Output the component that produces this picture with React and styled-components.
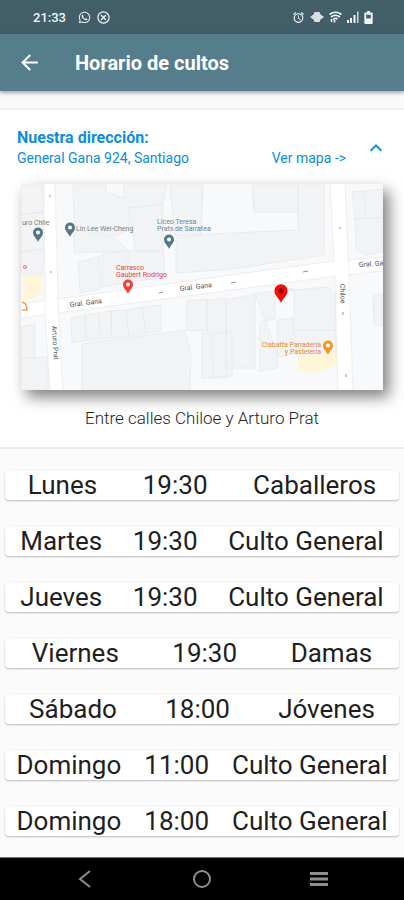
import React, { useState } from 'react';
import styled, { createGlobalStyle } from 'styled-components';
import { MdArrowBack, MdKeyboardArrowUp, MdKeyboardArrowDown, MdAlarm } from 'react-icons/md';
import { FaWhatsapp } from 'react-icons/fa';

const GlobalStyle = createGlobalStyle`
  * {
    box-sizing: border-box;
  }
  body {
    margin: 0;
    background: #fafafa;
    font-family: Roboto, "Liberation Sans", sans-serif;
    color: #1f1f1f;
  }
`

const Screen = styled.div`
  display: flex;
  flex-direction: column;
  min-height: 100vh;
`

const StatusBar = styled.div`
  display: flex;
  align-items: center;
  justify-content: space-between;
  height: 34px;
  padding: 0 31px 0 33px;
  background: #425e69;
  color: #f1f6f8;
`

const StatusGroup = styled.div`
  display: flex;
  align-items: center;
  gap: ${props => props.$gap};
`

const Clock = styled.span`
  margin-right: 6px;
  font-size: 13px;
  font-weight: 500;
`

const AppBar = styled.header`
  position: relative;
  display: flex;
  align-items: center;
  gap: 33px;
  height: 57px;
  padding: 0 17px;
  background: #567d8c;
  color: #ffffff;
  box-shadow: 0 2px 4px rgba(0, 0, 0, 0.35);
`

const IconButton = styled.button`
  display: flex;
  padding: 0;
  border: 0;
  background: none;
  color: ${props => props.$color || 'inherit'};
  cursor: pointer;
`

const Title = styled.h1`
  margin: 0;
  font-size: 20px;
  font-weight: 700;
`

const Panel = styled.section`
  margin-top: 17px;
  padding: 17px 21px 18px;
  border-top: 2px solid #f0f3f3;
  border-bottom: 2px solid #ececec;
  background: #ffffff;
`

const PanelHeader = styled.div`
  display: flex;
  align-items: center;
  gap: 18px;
  margin: 0 -5px 16px -4px;
  color: #0d8de0;
`

const Address = styled.div`
  flex: 1;
`

const AddressTitle = styled.h2`
  margin: 0;
  font-size: 16px;
  line-height: 21px;
  font-weight: 700;
`

const AddressLine = styled.div`
  display: flex;
  justify-content: space-between;
  font-size: 14px;
  line-height: 20px;
`

const MapLink = styled.a`
  color: inherit;
  text-decoration: none;
`

const MapImage = styled.svg`
  display: block;
  width: 100%;
  background: #f8f9fa;
  box-shadow: 6px 7px 14px rgba(0, 0, 0, 0.5);
  font-family: Roboto, sans-serif;
`

const Caption = styled.p`
  margin: 17px 0 0;
  font-size: 17px;
  line-height: 22px;
  font-weight: 300;
  text-align: center;
`

const Schedule = styled.table`
  display: block;
  padding: 22px 5px 21px;
`

const ScheduleBody = styled.tbody`
  display: flex;
  flex-direction: column;
  gap: 27px;
`

const ScheduleRow = styled.tr`
  display: flex;
  justify-content: space-around;
  border-radius: 4px;
  background: #ffffff;
  box-shadow: 0 1px 2px rgba(0, 0, 0, 0.25);
`

const Cell = styled.td`
  padding: 0;
  font-size: 26px;
  line-height: 29px;
  white-space: nowrap;
`

const NavBar = styled.nav`
  display: flex;
  align-items: center;
  justify-content: space-around;
  height: 43px;
  margin-top: auto;
  padding: 0 27px;
  border-top: 1px solid #777777;
  background: #000000;
`

const cultos = [
  { dia: 'Lunes', hora: '19:30', tipo: 'Caballeros' },
  { dia: 'Martes', hora: '19:30', tipo: 'Culto General' },
  { dia: 'Jueves', hora: '19:30', tipo: 'Culto General' },
  { dia: 'Viernes', hora: '19:30', tipo: 'Damas' },
  { dia: 'Sábado', hora: '18:00', tipo: 'Jóvenes' },
  { dia: 'Domingo', hora: '11:00', tipo: 'Culto General' },
  { dia: 'Domingo', hora: '18:00', tipo: 'Culto General' },
]

const CancelIcon = () => (
  <svg width="13" height="13" viewBox="0 0 13 13" fill="none" stroke="currentColor" strokeWidth="1.2">
    <circle cx="6.5" cy="6.5" r="5.6" />
    <path d="M4 4l5 5M9 4l-5 5" />
  </svg>
)

const VibrateIcon = () => (
  <svg width="14" height="12" viewBox="0 0 14 12" fill="currentColor">
    <rect x="4" y="1" width="6" height="10" rx="1" opacity="0.85" />
    <path d="M4 3v6L0 6zM10 3v6L14 6z" opacity="0.85" />
  </svg>
)

const WifiIcon = () => (
  <svg width="13" height="12" viewBox="0 0 13 12" fill="none" stroke="currentColor" strokeWidth="1.6">
    <path d="M0.5 3.5Q6.5-1 12.5 3.5M2 6Q6.5 2.5 11 6M4 8.5Q6.5 6.5 8.5 8" />
    <path d="M2.5 8v3M5.5 9v2.5" />
  </svg>
)

const SignalIcon = () => (
  <svg width="12" height="12" viewBox="0 0 12 12" fill="currentColor">
    <path d="M0 9h2v3H0zM3 7h2v5H3zM6.5 4h2v8h-2z" />
    <path d="M10 .5h1.5V12H10z" opacity="0.8" />
  </svg>
)

const BatteryIcon = () => (
  <svg width="9" height="13" viewBox="0 0 9 14">
    <path d="M3 0h3v1.5h2q1 0 1 1V13q0 1-1 1H1q-1 0-1-1V2.5q0-1 1-1h2z" fill="currentColor" />
    <rect x="2" y="4" width="5" height="4" fill="#425e69" />
  </svg>
)

const Pin = ({ x, y, color, dot = '#ffffff', scale = 1 }) => (
  <g transform={`translate(${x} ${y}) scale(${scale})`}>
    <path d="M0 0C-1.5-4-5-5.5-5-9.5a5 5 0 0 1 10 0C5-5.5 1.5-4 0 0z" fill={color} />
    <circle cx="0" cy="-9.5" r="2" fill={dot} />
  </g>
)

const StreetMap = () => (
  <MapImage viewBox="0 0 362 206" role="img" aria-label="Mapa de General Gana 924">
    {/* manzanas */}
    <g fill="#f2f3f5" stroke="#e6e9eb" strokeWidth="0.8">
      <path d="M0 0H22V28L0 31zM0 31L22 28V64L0 68zM0 68L22 65V90H0z" />
      <path d="M52 0H85V8L103 14V0H146L142 20L107 24L108 46L94 52L53 42z" />
      <path d="M53 45L92 53L108 67L53 69zM108 24L142 20V67L114 66z" />
      <path d="M149 0H182L180 50L154 52z" />
      <path d="M155 54L190 50L277 46V0H303V71L212 85L155 89z" />
      <path d="M231 0H277V28H233z" />
      <path d="M57 78L79 72V105L59 109zM82 70L105 67V99L80 103zM107 67L143 68V94L107 98z" />
      <path d="M331 8L362 5V34L334 35zM344 10V33M334 35L362 33V68L344 71L335 65z" />
      <path d="M0 143L14 140V174H0zM0 174L27 173V206H0z" />
      <path d="M50 134L64 131V157L51 159zM64 131L78 129V155L66 157zM78 129L90 127V154L80 155zM90 127L105 126L108 152L91 154zM105 126L121 123L125 149L108 152zM121 123L140 121V147L125 149z" />
      <path d="M61 160L164 146L170 172L169 206H61z" />
      <path d="M166 117L186 115V147L165 146zM186 116L205 114V194H181V149H186zM205 116L234 110V184H205zM191 150L211 148V192L192 193z" />
      <path d="M234 110L254 107V135L239 138V187L256 184V136L272 134V170L258 173z" />
      <path d="M257 107L273 104V146H315V110L307 103L273 106z" />
      <path d="M273 146H315V168L276 172z" />
      <path d="M352 112L362 110V142L353 140z" />
    </g>
    <path d="M2 91H21V111L3 117z" fill="#fff6d9" />
    <path d="M277 171L316 168V181L300 187H277z" fill="#fff6d9" />

    {/* calles */}
    <g fill="#ffffff" stroke="#e7eaed" strokeWidth="0.8">
      <path d="M0 120L312 77L362 73V87L316 92L0 134z" />
      <path d="M23-2H34L37 115L42 208H29L24 128z" />
      <path d="M309-2H324L328 90L332 208H317L314 96z" />
    </g>
    <path d="M24 118L36 117L37 127L25 129zM310 78L327 77L328 89L313 91z" fill="#ffffff" />
    <path
      d="M138 109l4-1M210 99l5-1M282 88l5-1M29 11v2M30 87v2M319 43v2M322 128v3M325 190v3"
      stroke="#8b9298"
    />

    <g fontSize="7" fill="#50565b">
      <text transform="translate(49 123) rotate(-7)">Gral. Gana</text>
      <text transform="translate(159 107) rotate(-7)">Gral. Gana</text>
      <text transform="translate(338 83) rotate(-4)">Gral. Ga</text>
      <text transform="translate(31 142) rotate(87)">Arturo Prat</text>
      <text transform="translate(319 100) rotate(88)">Chiloe</text>
    </g>
    <g fontSize="7" fill="#6b838f">
      <text x="1" y="41">uro Chile</text>
      <text x="55" y="47">Lin Lee Wei-Cheng</text>
      <text x="136" y="40">Liceo Teresa</text>
      <text x="136" y="47">Prats de Sarratea</text>
    </g>
    <g fontSize="7" fill="#e2453c">
      <text x="95" y="86">Carrasco</text>
      <text x="95" y="93">Gaubert Rodrigo</text>
    </g>
    <g fontSize="7" fill="#e5893a" textAnchor="end">
      <text x="300" y="163">Ciabatta Panaderia</text>
      <text x="300" y="170">y Pasteleria</text>
    </g>

    <Pin x={17} y={58} color="#54788a" />
    <Pin x={49} y={53} color="#54788a" />
    <Pin x={148} y={65} color="#54788a" />
    <Pin x={107} y={110} color="#ee3f3a" />
    <Pin x={307} y={171} color="#f29a20" />
    <Pin x={260} y={119} color="#fa0b0b" dot="#8f0707" scale={1.3} />
    <circle cx="4" cy="83" r="1.5" fill="none" stroke="#ee6a92" />
    <path d="M1 118q5 1 5 8H1" fill="none" stroke="#eda35c" strokeWidth="1.5" />
  </MapImage>
)

const App = () => {
  const [open, setOpen] = useState(true);

  return (
    <Screen>
      <GlobalStyle />
      <StatusBar>
        <StatusGroup $gap="6px">
          <Clock>21:33</Clock>
          <FaWhatsapp size={13} />
          <CancelIcon />
        </StatusGroup>
        <StatusGroup $gap="5px">
          <MdAlarm size={13} />
          <VibrateIcon />
          <WifiIcon />
          <SignalIcon />
          <BatteryIcon />
        </StatusGroup>
      </StatusBar>
      <AppBar>
        <IconButton aria-label="Volver">
          <MdArrowBack size={25} />
        </IconButton>
        <Title>Horario de cultos</Title>
      </AppBar>

      <Panel>
        <PanelHeader>
          <Address>
            <AddressTitle>Nuestra dirección:</AddressTitle>
            <AddressLine>
              <span>General Gana 924, Santiago</span>
              <MapLink href="#mapa">Ver mapa -&gt;</MapLink>
            </AddressLine>
          </Address>
          <IconButton aria-label="Mostrar mapa" aria-expanded={open} onClick={() => setOpen(!open)}>
            {open ? <MdKeyboardArrowUp size={24} /> : <MdKeyboardArrowDown size={24} />}
          </IconButton>
        </PanelHeader>
        {open && (
          <div id="mapa">
            <StreetMap />
            <Caption>Entre calles Chiloe y Arturo Prat</Caption>
          </div>
        )}
      </Panel>

      <Schedule>
        <ScheduleBody>
          {cultos.map(culto => (
            <ScheduleRow key={culto.dia + culto.hora}>
              <Cell>{culto.dia}</Cell>
              <Cell>{culto.hora}</Cell>
              <Cell>{culto.tipo}</Cell>
            </ScheduleRow>
          ))}
        </ScheduleBody>
      </Schedule>

      <NavBar>
        <IconButton $color="#8e8e8e" aria-label="Atrás">
          <svg width="20" height="20" viewBox="0 0 20 20" fill="none" stroke="currentColor" strokeWidth="2">
            <path d="M15 2L5 10l10 8" />
          </svg>
        </IconButton>
        <IconButton $color="#8e8e8e" aria-label="Inicio">
          <svg width="20" height="20" viewBox="0 0 20 20" fill="none" stroke="currentColor" strokeWidth="2">
            <circle cx="10" cy="10" r="8" />
          </svg>
        </IconButton>
        <IconButton $color="#8e8e8e" aria-label="Recientes">
          <svg width="20" height="20" viewBox="0 0 20 20" fill="none" stroke="currentColor" strokeWidth="3">
            <path d="M1 4.5h18M1 10h18M1 15.5h18" />
          </svg>
        </IconButton>
      </NavBar>
    </Screen>
  )
}

export default App;
